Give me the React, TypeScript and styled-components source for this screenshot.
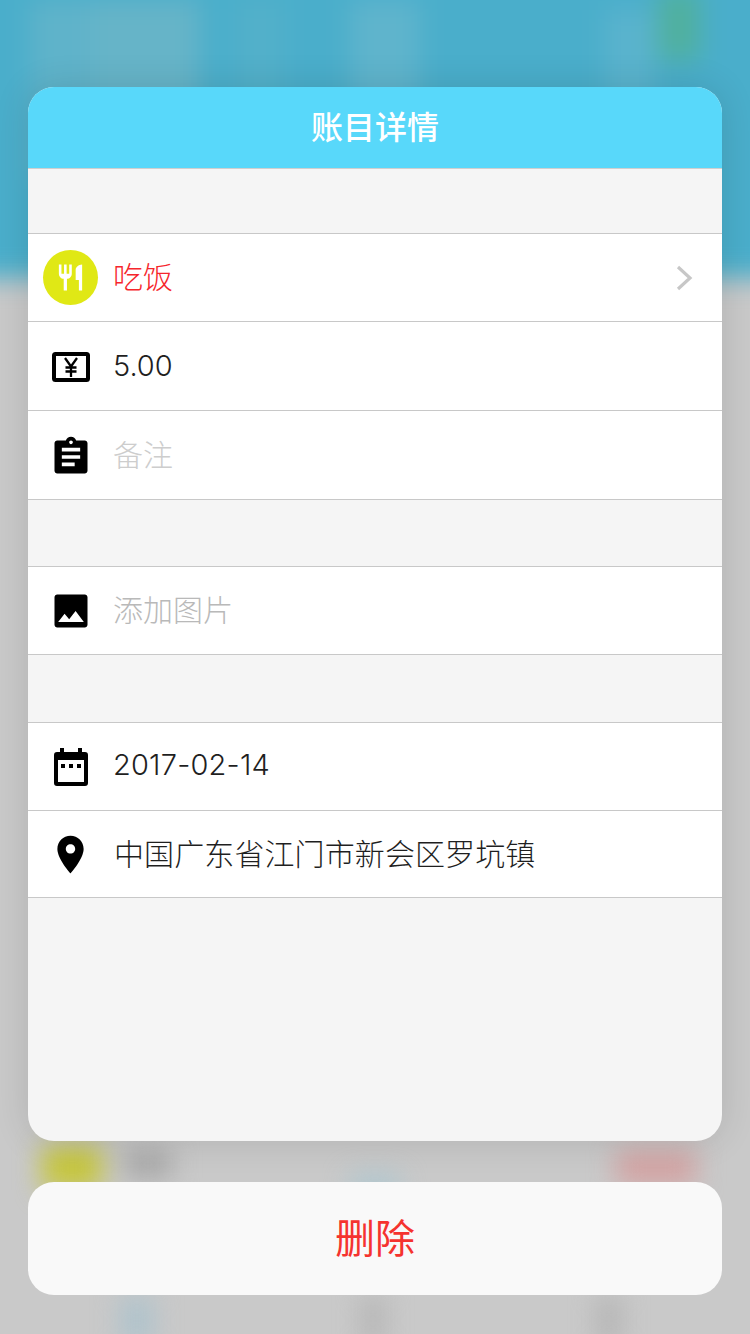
import styled, { createGlobalStyle } from "styled-components";

const GlobalStyle = createGlobalStyle`
  html, body {
    margin: 0;
    padding: 0;
    background: #c9c9c9;
    font-family: "Noto Sans CJK SC", "Noto Sans", sans-serif;
  }
`;

const BLEED = 40;

const blobs = [
  { x: 30, y: 0, w: 60, h: 180, color: "#5fb3ca" },
  { x: 90, y: 0, w: 110, h: 190, color: "#66b4c8" },
  { x: 235, y: 0, w: 50, h: 150, color: "#52b0ca" },
  { x: 350, y: 0, w: 70, h: 190, color: "#5fb4cc" },
  { x: 605, y: 10, w: 50, h: 170, color: "#5ab3cd" },
  { x: 658, y: -10, w: 42, h: 70, color: "#50b09e" },
  { x: 42, y: 1146, w: 60, h: 44, color: "#c6c63c" },
  { x: 124, y: 1150, w: 48, h: 28, color: "#a6a6a6" },
  { x: 616, y: 1150, w: 80, h: 36, color: "#d3a3a3" },
  { x: 350, y: 1176, w: 50, h: 20, color: "#a9c6d0" },
  { x: 120, y: 1296, w: 34, h: 50, color: "#afc3cc" },
  { x: 362, y: 1296, w: 22, h: 50, color: "#b4b4b4" },
  { x: 598, y: 1296, w: 22, h: 50, color: "#b2b2b2" },
];

const Page = styled.div`
  position: relative;
  width: 750px;
  height: 1334px;
  overflow: hidden;
  box-sizing: border-box;
  padding: 87px 28px 0;
  background: #c9c9c9;
`;

const Backdrop = styled.div`
  position: absolute;
  inset: -${BLEED}px;
  filter: blur(13px);
`;

const TopBand = styled.div`
  height: ${BLEED + 278}px;
  background: #4aaecb;
`;

const Blob = styled.div`
  position: absolute;
`;

const Sheet = styled.div`
  position: relative;
  display: flex;
  flex-direction: column;
  height: 1054px;
  border-radius: 26px;
  background: #f5f5f5;
  overflow: hidden;
  box-shadow: 0 0 36px rgba(0, 0, 0, 0.12);
`;

const Header = styled.header`
  display: flex;
  align-items: center;
  justify-content: center;
  box-sizing: border-box;
  height: 82px;
  padding-bottom: 6px;
  background: #58d8fa;
  border-bottom: 1px solid #cfcfcf;
  color: #fff;
  font-size: 32px;
  font-weight: 500;
`;

const Group = styled.section<{ $gap: number }>`
  margin-top: ${(p) => p.$gap}px;
  border-top: 1px solid #c8c8c8;
  background: #fff;
`;

const Row = styled.div<{ $h: number }>`
  display: flex;
  align-items: center;
  box-sizing: border-box;
  height: ${(p) => p.$h}px;
  padding: 0 28px 0 15px;
  border-bottom: 1px solid #c8c8c8;
`;

const IconSlot = styled.div<{ $dy?: number }>`
  display: flex;
  flex: none;
  align-items: center;
  justify-content: center;
  box-sizing: border-box;
  width: 55px;
  height: 55px;
  margin-right: 16px;
  padding-top: ${(p) => p.$dy ?? 0}px;
  svg {
    display: block;
  }
`;

const CategoryBadge = styled(IconSlot)`
  border-radius: 50%;
  background: #e0e815;
`;

const Label = styled.span<{ $tone?: "red" | "muted" | "faint" }>`
  flex: 1;
  margin-left: -1px;
  padding-bottom: 5px;
  font-size: 30px;
  font-weight: 300;
  line-height: 40px;
  color: ${(p) =>
    p.$tone === "red"
      ? "#f6262c"
      : p.$tone === "muted"
        ? "#b9b9b9"
        : p.$tone === "faint"
          ? "#cdcdcd"
          : "#1f1f1f"};
`;

const Address = styled(Label)`
  margin-left: 0;
  letter-spacing: 0.1px;
`;

const Amount = styled.span`
  flex: 1;
  margin-left: -1px;
  font-family: Inter, "Noto Sans", sans-serif;
  font-size: 29px;
  font-weight: 300;
  line-height: 40px;
  color: #1f1f1f;
`;

const DateText = styled(Amount)`
  padding-bottom: 3px;
  letter-spacing: 0.2px;
`;

const DeleteButton = styled.button`
  position: relative;
  display: block;
  width: 100%;
  height: 113px;
  margin-top: 41px;
  padding: 0 0 6px;
  border: 0;
  border-radius: 26px;
  background: #f9f9f9;
  color: #f5332f;
  font-family: inherit;
  font-size: 40px;
  font-weight: 400;
`;

const ForkKnife = () => (
  <svg width="31" height="31" viewBox="0 0 24 24" fill="#fff">
    <path d="M11 9H9V2H7v7H5V2H3v7c0 2.120 1.660 3.840 3.750 3.970V22h2.500v-9.030C11.340 12.840 13 11.120 13 9V2h-2v7zm5-3v8h2.500v8H21V2c-2.760 0-5 2.240-5 4z" />
  </svg>
);

const Chevron = () => (
  <svg width="18" height="26" viewBox="0 0 18 26" fill="none" stroke="#c7c7c7" strokeWidth="3.200">
    <path d="M2 2l12 11L2 24" />
  </svg>
);

const YenNote = () => (
  <svg width="38" height="30" viewBox="0 0 38 30">
    <rect x="2" y="2" width="34" height="26" rx="1.500" fill="#fff" stroke="#000" strokeWidth="4" />
    <path
      d="M13 6l6 8.500L25 6M19 14v11M13.500 15.500h11M13.500 19.500h11"
      fill="none"
      stroke="#000"
      strokeWidth="2.300"
    />
  </svg>
);

const Clipboard = () => (
  <svg width="44" height="44" viewBox="0 0 24 24">
    <path d="M19.500 3h-4.680C14.400 1.840 13.300 1 12 1c-1.300 0-2.400.840-2.820 2H4.500C3.700 3 3 3.700 3 4.500v15c0 .800.700 1.500 1.500 1.500h15c.800 0 1.500-.700 1.500-1.500v-15c0-.800-.700-1.500-1.500-1.500zM12 3c.550 0 1 .450 1 1s-.450 1-1 1-1-.450-1-1 .450-1 1-1zm2 14H7v-2h7v2zm3-4H7v-2h10v2zm0-4H7V7h10v2z" />
  </svg>
);

const Photo = () => (
  <svg width="44" height="44" viewBox="0 0 24 24">
    <path d="M21 19.500v-15C21 3.700 20.300 3 19.500 3h-15C3.700 3 3 3.700 3 4.500v15c0 .800.700 1.500 1.500 1.500h15c.800 0 1.500-.700 1.500-1.500zM8.500 13.500l2.500 3.010L14.500 12l4.500 6H5l3.500-4.500z" />
  </svg>
);

const Calendar = () => (
  <svg width="34" height="38" viewBox="0 0 34 38">
    <path d="M6 0h4v4h14V0h4v4h3a3 3 0 0 1 3 3v28a3 3 0 0 1-3 3H3a3 3 0 0 1-3-3V7a3 3 0 0 1 3-3h3z" />
    <rect x="4" y="12" width="26" height="22" fill="#fff" />
    <path d="M7 16h4v4H7zM15 16h4v4h-4zM23 16h4v4h-4z" />
  </svg>
);

const Pin = () => (
  <svg width="45" height="45" viewBox="0 0 24 24">
    <path d="M12 2C8.130 2 5 5.130 5 9c0 5.250 7 13 7 13s7-7.750 7-13c0-3.870-3.130-7-7-7zm0 9.500c-1.380 0-2.500-1.120-2.500-2.500s1.120-2.500 2.500-2.500 2.500 1.120 2.500 2.500-1.120 2.500-2.500 2.500z" />
  </svg>
);

export default function App() {
  return (
    <>
      <GlobalStyle />
      <Page>
        <Backdrop>
          <TopBand />
          {blobs.map((b) => (
            <Blob
              key={`${b.x}-${b.y}`}
              style={{
                left: b.x + BLEED,
                top: b.y + BLEED,
                width: b.w,
                height: b.h,
                background: b.color,
              }}
            />
          ))}
        </Backdrop>

        <Sheet>
          <Header>账目详情</Header>

          <Group $gap={64}>
            <Row $h={88}>
              <CategoryBadge>
                <ForkKnife />
              </CategoryBadge>
              <Label $tone="red">吃饭</Label>
              <Chevron />
            </Row>
            <Row $h={89}>
              <IconSlot $dy={2}>
                <YenNote />
              </IconSlot>
              <Amount>5.00</Amount>
            </Row>
            <Row $h={89}>
              <IconSlot $dy={4}>
                <Clipboard />
              </IconSlot>
              <Label $tone="faint">备注</Label>
            </Row>
          </Group>

          <Group $gap={66}>
            <Row $h={88}>
              <IconSlot>
                <Photo />
              </IconSlot>
              <Label $tone="muted">添加图片</Label>
            </Row>
          </Group>

          <Group $gap={67}>
            <Row $h={88}>
              <IconSlot>
                <Calendar />
              </IconSlot>
              <DateText>2017-02-14</DateText>
            </Row>
            <Row $h={87}>
              <IconSlot>
                <Pin />
              </IconSlot>
              <Address>中国广东省江门市新会区罗坑镇</Address>
            </Row>
          </Group>
        </Sheet>

        <DeleteButton>删除</DeleteButton>
      </Page>
    </>
  );
}
